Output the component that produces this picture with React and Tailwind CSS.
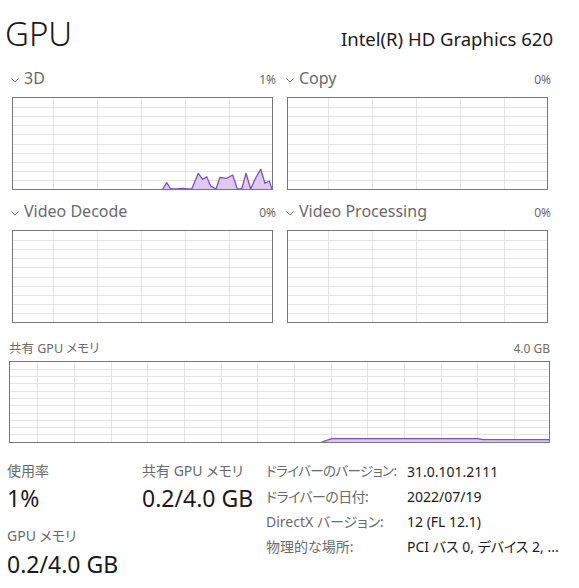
import React from 'react';

// 3D engine usage samples (x, y inside the chart box)
const gpu3dPoints = [
  [149.7, 91], [153.7, 84.7], [157.7, 91], [164.7, 91], [170.3, 90.3], [174.3, 91],
  [178.7, 91], [185.3, 75.3], [189.7, 81.3], [193.7, 78.7], [197.7, 88], [203, 91],
  [207, 79.3], [213.7, 80.3], [219.7, 77], [224.3, 91], [228.7, 91], [233, 75.3],
  [237.7, 91], [242, 81.3], [247.7, 71.3], [252, 85.3], [256.3, 83], [259, 91],
];

const sharedMemPoints = [
  [311.7, 80], [321.7, 76.7], [468, 76.7], [473, 77.7], [539, 77.7],
];

function Grid({ w, h, cols, rows }) {
  return (
    <g stroke="#e4e4e4" strokeWidth="1">
      {cols.map((x) => (
        <line key={'v' + x} x1={x + 0.5} y1="0" x2={x + 0.5} y2={h} />
      ))}
      {rows.map((y) => (
        <line key={'h' + y} x1="0" y1={y + 0.5} x2={w} y2={y + 0.5} />
      ))}
    </g>
  );
}

function Chart({ w, h, cols, rows, points }) {
  const line = points ? points.map((p) => p.join(',')).join(' ') : '';
  const area = points
    ? `${points[0][0]},${h} ${line} ${points[points.length - 1][0]},${h}`
    : '';
  return (
    <div className="border border-[#777777] bg-white" style={{ width: w + 2, height: h + 2 }}>
      <svg width={w} height={h} viewBox={`0 0 ${w} ${h}`} className="block">
        <Grid w={w} h={h} cols={cols} rows={rows} />
        {points && (
          <>
            <polygon points={area} fill="#dccaf3" />
            <polyline points={line} fill="none" stroke="#7f50c2" strokeWidth="1.3" strokeLinejoin="round" />
          </>
        )}
      </svg>
    </div>
  );
}

function Chevron() {
  return (
    <svg width="8" height="5" viewBox="0 0 8 5" className="block mt-[4px]">
      <polyline points="0.5,0.5 4,4 7.5,0.5" fill="none" stroke="#7a7a7a" strokeWidth="1" />
    </svg>
  );
}

const smallCols = [40, 84, 128, 172, 216];
const smallRows = [9, 18, 27, 36, 46, 55, 64, 73, 82];
const memCols = [27, 64, 101, 137, 174, 211, 247, 284, 321, 357, 394, 431, 467, 504];
const memRows = [7, 14, 21, 29, 36, 43, 51, 58, 65, 72];

function EnginePanel({ name, value, points }) {
  return (
    <div className="w-[265px]">
      <div className="flex items-start justify-between h-[22px]">
        <div className="flex items-center gap-[5px] h-[22px]">
          <Chevron />
          <span className="text-[16px] leading-[24px] text-[#6a6a6a]">{name}</span>
        </div>
        <span className="text-[12px] leading-[24px] pt-[1px] text-[#6a6a6a]">{value}</span>
      </div>
      <div className="mt-[8px] ml-[1px]">
        <Chart w={259} h={91} cols={smallCols} rows={smallRows} points={points} />
      </div>
    </div>
  );
}

const jp = "[font-feature-settings:'palt']";

export default function App() {
  return (
    <div className="w-[579px] h-[588px] bg-white overflow-hidden text-[#1b1b1b] font-['Noto_Sans','Noto_Sans_CJK_JP',sans-serif]">
      {/* ヘッダー */}
      <div className="flex items-baseline justify-between pl-[5px] pr-[26px] pt-[12px]">
        <span className="text-[33px] leading-[44px] font-light">GPU</span>
        <span className="text-[18.5px] leading-[24px]">Intel(R) HD Graphics 620</span>
      </div>

      {/* エンジンのグラフ */}
      <div className="mt-[11px] pl-[11px] grid grid-cols-[265px_265px] gap-x-[10px] gap-y-[10px]">
        <EnginePanel name="3D" value="1%" points={gpu3dPoints} />
        <EnginePanel name="Copy" value="0%" />
        <EnginePanel name="Video Decode" value="0%" />
        <EnginePanel name="Video Processing" value="0%" />
      </div>

      {/* 共有 GPU メモリ */}
      <div className="mt-[18px] pl-[9px] w-[550px]">
        <div className="flex items-center justify-between h-[16px] text-[#6a6a6a]">
          <span className={`text-[12.5px] leading-[16px] ${jp}`}>共有 GPU メモリ</span>
          <span className="text-[12px] leading-[16px]">4.0 GB</span>
        </div>
        <div className="mt-[4px]">
          <Chart w={539} h={80} cols={memCols} rows={memRows} points={sharedMemPoints} />
        </div>
      </div>

      {/* 詳細 */}
      <div className="mt-[16px] flex">
        <div className={`pl-[7px] w-[142px] pt-[3px] ${jp}`}>
          <div className="h-[18px] text-[14px] leading-[18px] text-[#6a6a6a]">使用率</div>
          <div className="mt-[4px] h-[28px] text-[23px] leading-[28px]">1%</div>
          <div className="mt-[15px] h-[18px] text-[14px] leading-[18px] text-[#6a6a6a]">GPU メモリ</div>
          <div className="mt-[5px] h-[28px] text-[23px] leading-[28px]">0.2/4.0 GB</div>
        </div>
        <div className={`w-[124px] pt-[3px] ${jp}`}>
          <div className="h-[18px] text-[14px] leading-[18px] text-[#6a6a6a]">共有 GPU メモリ</div>
          <div className="mt-[4px] h-[28px] text-[23px] leading-[28px]">0.2/4.0 GB</div>
        </div>
        <div className={`grid grid-cols-[141px_auto] auto-rows-[25px] text-[14px] leading-[25px] whitespace-nowrap ${jp}`}>
          <span className="text-[#6a6a6a] text-[13.5px] tracking-[-0.6px]">ドライバーのバージョン:</span>
          <span>31.0.101.2111</span>
          <span className="text-[#6a6a6a] tracking-[-0.6px]">ドライバーの日付:</span>
          <span>2022/07/19</span>
          <span className="text-[#6a6a6a]">DirectX バージョン:</span>
          <span>12 (FL 12.1)</span>
          <span className="text-[#6a6a6a]">物理的な場所:</span>
          <span>PCI バス 0, デバイス 2, ...</span>
        </div>
      </div>
    </div>
  );
}
